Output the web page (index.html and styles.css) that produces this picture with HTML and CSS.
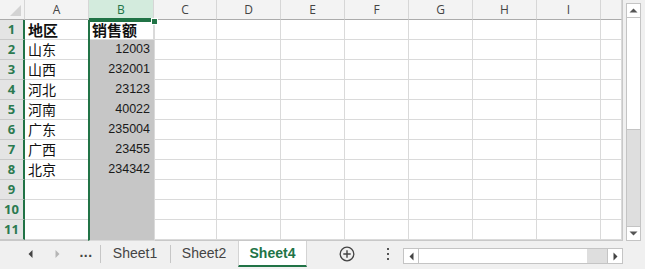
FILE: index.html
```html
<!DOCTYPE html>
<html lang="zh-CN">
<head>
    <meta charset="UTF-8">
    <meta name="viewport" content="width=device-width, initial-scale=1.0">
    <title>销售额</title>
    <link rel="stylesheet" href="styles.css">
</head>
<body>
    <div class="book">
        <div class="main">
            <!-- 表格区域 -->
            <div class="sheet">
                <div class="hd corner"><span class="tri"></span></div><div class="hd">A</div><div class="hd sel">B</div><div class="hd">C</div><div class="hd">D</div><div class="hd">E</div><div class="hd">F</div><div class="hd">G</div><div class="hd">H</div><div class="hd">I</div><div class="hd"></div>
                <div class="rh">1</div><div class="cell bold">地区</div><div class="cell bold active">销售额</div><div></div><div></div><div></div><div></div><div></div><div></div><div></div><div></div>
                <div class="rh">2</div><div class="cell">山东</div><div class="cell num">12003</div><div></div><div></div><div></div><div></div><div></div><div></div><div></div><div></div>
                <div class="rh">3</div><div class="cell">山西</div><div class="cell num">232001</div><div></div><div></div><div></div><div></div><div></div><div></div><div></div><div></div>
                <div class="rh">4</div><div class="cell">河北</div><div class="cell num">23123</div><div></div><div></div><div></div><div></div><div></div><div></div><div></div><div></div>
                <div class="rh">5</div><div class="cell">河南</div><div class="cell num">40022</div><div></div><div></div><div></div><div></div><div></div><div></div><div></div><div></div>
                <div class="rh">6</div><div class="cell">广东</div><div class="cell num">235004</div><div></div><div></div><div></div><div></div><div></div><div></div><div></div><div></div>
                <div class="rh">7</div><div class="cell">广西</div><div class="cell num">23455</div><div></div><div></div><div></div><div></div><div></div><div></div><div></div><div></div>
                <div class="rh">8</div><div class="cell">北京</div><div class="cell num">234342</div><div></div><div></div><div></div><div></div><div></div><div></div><div></div><div></div>
                <div class="rh">9</div><div class="cell"></div><div class="cell num"></div><div></div><div></div><div></div><div></div><div></div><div></div><div></div><div></div>
                <div class="rh">10</div><div class="cell"></div><div class="cell num"></div><div></div><div></div><div></div><div></div><div></div><div></div><div></div><div></div>
                <div class="rh">11</div><div class="cell"></div><div class="cell num"></div><div></div><div></div><div></div><div></div><div></div><div></div><div></div><div></div>
                <div class="selection"><span class="handle"></span></div>
            </div>

            <!-- 垂直滚动条 -->
            <div class="vscroll">
                <div class="sbtn">
                    <svg width="9" height="5" viewBox="0 0 9 5"><polygon points="0.5,4.5 8.5,4.5 4.5,0.5" fill="#555"/></svg>
                </div>
                <div class="vthumb"></div>
                <div class="vtrack"></div>
                <div class="sbtn">
                    <svg width="9" height="5" viewBox="0 0 9 5"><polygon points="0.5,0.5 8.5,0.5 4.5,4.5" fill="#555"/></svg>
                </div>
            </div>
        </div>

        <!-- 工作表标签 -->
        <div class="tabs">
            <div class="nav">
                <span class="arrow">
                    <svg width="5" height="8" viewBox="0 0 5 8"><polygon points="4.5,0 4.5,8 0.5,4" fill="#444"/></svg>
                </span>
                <span class="arrow wide">
                    <svg width="5" height="8" viewBox="0 0 5 8"><polygon points="0.5,0 0.5,8 4.5,4" fill="#b5b5b5"/></svg>
                </span>
                <span class="more">...</span>
            </div>
            <div class="tab t1">Sheet1</div>
            <div class="tab t2">Sheet2</div>
            <div class="tab current">Sheet4</div>
            <span class="add">
                <svg width="16" height="16" viewBox="0 0 16 16">
                    <circle cx="8" cy="8" r="6.8" fill="none" stroke="#444" stroke-width="1.3"/>
                    <path d="M8 4.3V11.7M4.3 8H11.7" stroke="#444" stroke-width="1.4"/>
                </svg>
            </span>
            <span class="vdots"><i></i><i></i><i></i></span>
            <div class="hscroll">
                <div class="sbtn">
                    <svg width="5" height="9" viewBox="0 0 5 9"><polygon points="4.5,0.5 4.5,8.5 0.5,4.5" fill="#444"/></svg>
                </div>
                <div class="hthumb"></div>
                <div class="htrack"></div>
                <div class="sbtn">
                    <svg width="5" height="9" viewBox="0 0 5 9"><polygon points="0.5,0.5 0.5,8.5 4.5,4.5" fill="#444"/></svg>
                </div>
            </div>
        </div>
    </div>
</body>
</html>
```

FILE: styles.css
```css
body {
    margin: 0;
    font-family: "Noto Sans CJK SC", "Liberation Sans", sans-serif;
    background-color: #f0f0f0;
}

.book {
    width: 645px;
    height: 269px;
    display: flex;
    flex-direction: column;
}

.main {
    display: flex;
    height: 241px;
}

/* 表格 */
.sheet {
    position: relative;
    display: grid;
    grid-template-columns: 25px 64px 65px 63px 64px 64px 64px 64px 64px 64px 21px;
    grid-auto-rows: 20px;
    width: 622px;
    border-right: 1px solid #c8c8c8;
    border-bottom: 1px solid #c8c8c8;
    background-color: #ffffff;
}

.sheet > div {
    box-sizing: border-box;
    border-right: 1px solid #dadada;
    border-bottom: 1px solid #dadada;
}

.sheet .hd {
    background-color: #f3f3f3;
    border-bottom: 1px solid #ababab;
    border-right: 1px solid #d6d6d6;
    color: #444;
    font-family: "Open Sans", "Liberation Sans", sans-serif;
    font-size: 12px;
    line-height: 19px;
    text-align: center;
}

.sheet .hd.sel {
    background-color: #d3ebdd;
    color: #217346;
    border-bottom: 2px solid #217346;
}

.sheet .corner {
    position: relative;
}

.corner .tri {
    position: absolute;
    right: 3px;
    bottom: 3px;
    width: 0;
    height: 0;
    border-left: 11px solid transparent;
    border-bottom: 11px solid #d3d3d3;
}

.sheet .rh {
    background-color: #e4e4e4;
    border-right: 2px solid #217346;
    border-bottom: 1px solid #c9c9c9;
    color: #2b7a50;
    font-family: "Open Sans", "Liberation Sans", sans-serif;
    font-size: 13px;
    font-weight: bold;
    line-height: 19px;
    text-align: center;
}

.sheet .cell {
    padding: 0 3px;
    font-size: 14px;
    line-height: 19px;
    color: #111;
    white-space: nowrap;
}

.sheet .cell.bold {
    font-weight: bold;
    font-size: 15px;
}

.sheet .cell.num {
    background-color: #c6c6c6;
    text-align: right;
    font-family: "Liberation Sans", sans-serif;
    font-size: 12.5px;
    color: #1a1a1a;
    border-bottom-color: #c6c6c6;
    border-right-color: #c6c6c6;
}

.sheet .cell.active {
    background-color: #ffffff;
}

.selection {
    position: absolute;
    left: 88px;
    top: 20px;
    width: 67px;
    height: 221px;
    box-sizing: border-box;
    border: 2px solid #217346;
    border-bottom: none;
}

.selection .handle {
    position: absolute;
    right: -4px;
    top: -4px;
    width: 5px;
    height: 5px;
    background-color: #217346;
    border: 1px solid #ffffff;
}

/* 滚动条 */
.vscroll {
    display: flex;
    flex-direction: column;
    width: 15px;
    margin: 3px 3px 0 3px;
    border: 1px solid #c4c4c4;
    box-sizing: border-box;
    height: 238px;
}

.sbtn {
    display: flex;
    align-items: center;
    justify-content: center;
    background-color: #ffffff;
    flex: 0 0 13px;
}

.vscroll .sbtn {
    height: 13px;
}

.vthumb {
    height: 113px;
    box-sizing: border-box;
    background-color: #ffffff;
    border-top: 1px solid #c4c4c4;
    border-bottom: 1px solid #c4c4c4;
}

.vtrack {
    flex: 1;
    background-color: #dedede;
    border-bottom: 1px solid #c4c4c4;
}

/* 标签栏 */
.tabs {
    display: flex;
    align-items: flex-start;
    height: 28px;
    font-family: "Liberation Sans", sans-serif;
    font-size: 14px;
    color: #444;
}

.nav {
    display: flex;
    align-items: center;
    width: 100px;
    height: 26px;
    padding-left: 18px;
    box-sizing: border-box;
}

.arrow {
    display: flex;
    justify-content: center;
    width: 24px;
}

.arrow.wide {
    width: 30px;
}

.more {
    width: 28px;
    text-align: center;
    font-weight: bold;
    letter-spacing: 0.5px;
    line-height: 20px;
    padding-bottom: 4px;
}

.tab {
    height: 25px;
    line-height: 25px;
    text-align: center;
    box-sizing: border-box;
}

.tab.t1,
.tab.t2 {
    position: relative;
}

.tab.t1::before,
.tab.t2::before {
    content: "";
    position: absolute;
    left: 0;
    top: 4px;
    height: 18px;
    border-left: 1px solid #c6c6c6;
}

.tab.t1 {
    width: 70px;
}

.tab.t2 {
    width: 68px;
}

.tab.current {
    width: 69px;
    height: 26px;
    background-color: #ffffff;
    border-left: 1px solid #d4d4d4;
    border-right: 1px solid #d4d4d4;
    border-bottom: 2px solid #217346;
    color: #217346;
    font-weight: bold;
    line-height: 25px;
}

.add {
    display: flex;
    margin: 5px 0 0 32px;
}

.vdots {
    display: flex;
    flex-direction: column;
    gap: 3px;
    margin: 7px 0 0 32px;
}

.vdots i {
    display: block;
    width: 2px;
    height: 2px;
    background-color: #555;
}

.hscroll {
    display: flex;
    width: 220px;
    height: 16px;
    margin: 7px 0 0 14px;
    border: 1px solid #c4c4c4;
    box-sizing: border-box;
}

.hscroll .sbtn {
    flex: 0 0 14px;
}

.hthumb {
    width: 168px;
    background-color: #ffffff;
    border-left: 1px solid #c4c4c4;
}

.htrack {
    flex: 1;
    background-color: #dedede;
    border-right: 1px solid #c4c4c4;
}
```
